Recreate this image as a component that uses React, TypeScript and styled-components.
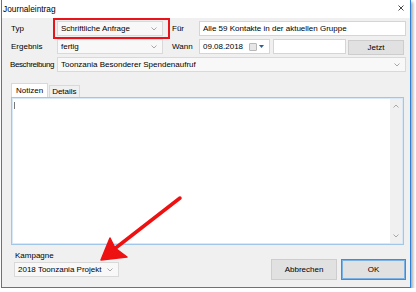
import styled, {createGlobalStyle} from "styled-components";

const GlobalStyle = createGlobalStyle`
  html, body {
    margin: 0;
    padding: 0;
    background: #ffffff;
  }
  body {
    font-family: "Liberation Sans", Arial, sans-serif;
    font-size: 8px;
    color: #000;
  }
`

const Window = styled.div`
  position: relative;
  margin-left: 1px;
  width: 410px;
  height: 288px;
  box-sizing: border-box;
  border: 1px solid #2f80d0;
  border-top: none;
  background: #f0f0f0;
  box-shadow: 2px 2px 3px rgba(0, 0, 0, 0.35);
  display: flex;
  flex-direction: column;
`

const TitleBar = styled.div`
  height: 18px;
  flex: none;
  background: #fff;
  display: flex;
  align-items: center;
  justify-content: space-between;
  padding: 0 6px 0 1px;
  font-size: 8.3px;
`

const CloseX = styled.svg`
  width: 6px;
  height: 6px;
  margin-top: -2px;
`

const Body = styled.div`
  flex: 1;
  display: flex;
  flex-direction: column;
  padding: 3px 4px 7px 8px;
`

const FormGrid = styled.div`
  display: grid;
  grid-template-columns: 47px 106px 36px 1fr;
  grid-auto-rows: 15px;
  row-gap: 3px;
`

const Label = styled.div<{ $indent?: number; $tight?: boolean }>`
  display: flex;
  align-items: center;
  padding-left: ${p => p.$indent ?? 1}px;
  white-space: nowrap;
  letter-spacing: ${p => (p.$tight ? "-0.4px" : "normal")};
`

const Field = styled.div<{ $white?: boolean; $span?: boolean; $width?: number }>`
  position: relative;
  box-sizing: border-box;
  height: 15px;
  display: flex;
  align-items: center;
  justify-content: space-between;
  padding: 0 5px 0 3px;
  border: 1px solid ${p => (p.$white ? "#d5d5d5" : "#d9d9d9")};
  background: ${p => (p.$white ? "#fff" : "#f8f8f8")};
  white-space: nowrap;
  ${p => (p.$span ? "grid-column: 2 / -1;" : "")}
  ${p => (p.$width ? `width: ${p.$width}px; flex: none;` : "")}
`

const Chevron = styled.svg`
  width: 6px;
  height: 4px;
  flex: none;
`

const RedFrame = styled.div`
  position: absolute;
  left: -5px;
  top: -4px;
  right: -8px;
  bottom: -4px;
  border: 2px solid #e8141b;
  pointer-events: none;
`

const WannCell = styled.div`
  display: flex;
  gap: 3px;
`

const Button = styled.button<{ $default?: boolean; $width?: number }>`
  box-sizing: border-box;
  font-family: inherit;
  font-size: 8px;
  color: #000;
  padding: 0;
  background: #e1e1e1;
  border: 1px solid ${p => (p.$default ? "#3c8ddb" : "#cdcdcd")};
  ${p => (p.$default ? "box-shadow: inset 0 0 0 1px #7ab2e6;" : "")}
  width: ${p => p.$width ?? 56}px;
`

const SmallButton = styled(Button)`
  height: 15px;
  margin-top: 1px;
  margin-left: -1px;
`

const DateIcon = styled.div`
  display: flex;
  align-items: center;
  gap: 2px;
`

const CalBox = styled.div`
  width: 6px;
  height: 6px;
  border: 1px solid #b8b8b8;
  border-radius: 1px;
  background: #e6e6e6;
`

const TabStrip = styled.div`
  margin: 11px 0 0 1px;
  height: 14px;
  display: flex;
  align-items: flex-end;
`

const Tab = styled.div<{ $active?: boolean }>`
  box-sizing: border-box;
  height: ${p => (p.$active ? 14 : 12)}px;
  padding: 0 ${p => (p.$active ? 4 : 2)}px;
  display: flex;
  align-items: center;
  background: ${p => (p.$active ? "#fff" : "#f0f0f0")};
  border: 1px solid #d9d9d9;
  border-bottom: none;
  margin-right: ${p => (p.$active ? 1 : 0)}px;
`

const NotePanel = styled.div`
  margin: 0 2px 0 1px;
  height: 148px;
  box-sizing: border-box;
  background: #fff;
  border: 1px solid #a0c6ea;
  box-shadow: inset 0 0 0 1px #d8e8f7;
  display: flex;
`

const NoteText = styled.div`
  flex: 1;
  padding: 4px 2px;
`

const Caret = styled.div`
  width: 1px;
  height: 7px;
  background: #777;
`

const ScrollBar = styled.div`
  width: 12px;
  margin: 1px 1px 1px 0;
  background: #f0f0f0;
  display: flex;
  flex-direction: column;
  justify-content: space-between;
  align-items: center;
  padding: 5px 0;
`

const Footer = styled.div`
  margin-top: auto;
  display: flex;
  justify-content: space-between;
  align-items: flex-end;
`

const Campaign = styled.div`
  display: flex;
  flex-direction: column;
  gap: 2px;
  margin: 0 0 3px 4px;
`

const CampaignLabel = styled.div`
  padding-left: 1px;
`

const ButtonRow = styled.div`
  display: flex;
  gap: 4px;
  & > button {
    height: 21px;
  }
`

const ArrowLayer = styled.svg`
  position: absolute;
  left: -2px;
  top: 0;
  width: 416px;
  height: 292px;
  pointer-events: none;
`

const Down = ({color = "#a8a8a8"}: { color?: string }) => (
    <Chevron viewBox="0 0 6 4">
        <path d="M0.5 0.5 L3 3 L5.5 0.5" fill="none" stroke={color} strokeWidth="1"/>
    </Chevron>
)

const Up = () => (
    <Chevron viewBox="0 0 6 4">
        <path d="M0.5 3.5 L3 1 L5.5 3.5" fill="none" stroke="#a8a8a8" strokeWidth="1"/>
    </Chevron>
)

const App = () => {
    return (
        <>
            <GlobalStyle/>
            <Window>
                <TitleBar>
                    <span>Journaleintrag</span>
                    <CloseX viewBox="0 0 6 6">
                        <path d="M0.5 0.5 L5.5 5.5 M5.5 0.5 L0.5 5.5" stroke="#333" strokeWidth="0.9"/>
                    </CloseX>
                </TitleBar>
                <Body>
                    <FormGrid>
                        <Label>Typ</Label>
                        <Field>
                            Schriftliche Anfrage
                            <Down/>
                            <RedFrame/>
                        </Field>
                        <Label $indent={9}>Für</Label>
                        <Field $white>Alle 59 Kontakte in der aktuellen Gruppe</Field>

                        <Label>Ergebnis</Label>
                        <Field>
                            fertig
                            <Down/>
                        </Field>
                        <Label $indent={9}>Wann</Label>
                        <WannCell>
                            <Field $white $width={71}>
                                09.08.2018
                                <DateIcon>
                                    <CalBox/>
                                    <svg width="5" height="3" viewBox="0 0 5 3">
                                        <path d="M0 0 H5 L2.5 3 Z" fill="#2d5f95"/>
                                    </svg>
                                </DateIcon>
                            </Field>
                            <Field $white $width={73}/>
                            <SmallButton>Jetzt</SmallButton>
                        </WannCell>

                        <Label $indent={0} $tight>Beschreibung</Label>
                        <Field $span>
                            Toonzania Besonderer Spendenaufruf
                            <Down/>
                        </Field>
                    </FormGrid>

                    <TabStrip>
                        <Tab $active>Notizen</Tab>
                        <Tab>Details</Tab>
                    </TabStrip>
                    <NotePanel>
                        <NoteText>
                            <Caret/>
                        </NoteText>
                        <ScrollBar>
                            <Up/>
                            <Down/>
                        </ScrollBar>
                    </NotePanel>

                    <Footer>
                        <Campaign>
                            <CampaignLabel>Kampagne</CampaignLabel>
                            <Field $width={105}>
                                2018 Toonzania Projekt
                                <Down/>
                            </Field>
                        </Campaign>
                        <ButtonRow>
                            <Button $width={66}>Abbrechen</Button>
                            <Button $default $width={65}>OK</Button>
                        </ButtonRow>
                    </Footer>
                </Body>
                <ArrowLayer viewBox="0 0 416 292">
                    <line x1="180" y1="198" x2="113" y2="250" stroke="#ee1111" strokeWidth="3.5"
                          strokeLinecap="round"/>
                    <path d="M101 260 L110 238 L115 248 L127 257 Z" fill="#ee1111" stroke="#ee1111"
                          strokeWidth="1.5" strokeLinejoin="round"/>
                </ArrowLayer>
            </Window>
        </>
    )
}

export default App
